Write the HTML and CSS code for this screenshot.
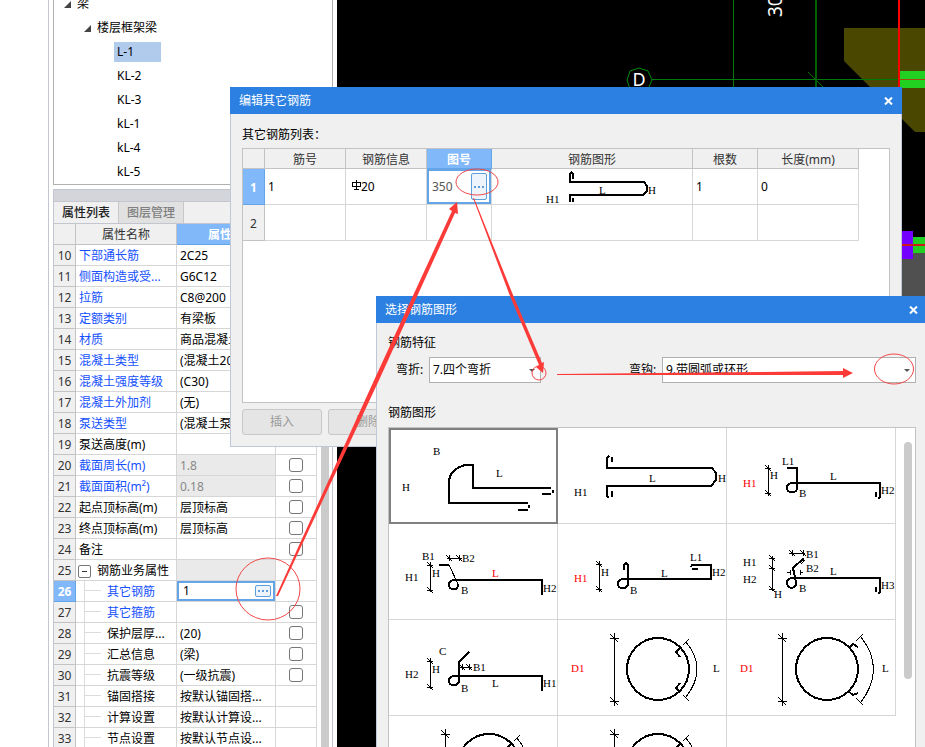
FILE: index.html
```html
<!DOCTYPE html>
<html lang="zh-CN">
<head>
<meta charset="utf-8">
<title>编辑其它钢筋</title>
<link rel="stylesheet" href="styles.css">
</head>
<body>
<svg class="defs" aria-hidden="true">
  <defs>
    <g id="tick"><path d="M-3 0H3M-3 -3L3 3"/></g>
    <g id="tick-h"><path d="M0 -3V3M-3 -3L3 3"/></g>
    <g id="tick-big"><path d="M-4 0H5M-4 -4L4 4"/></g>
    <g id="ring-in">
      <path class="thin" d="M56 13V86M128 22Q150 49 128 77M125 25L131 19M125 75L131 81"/>
      <use href="#tick-big" class="thin" x="56" y="18"/><use href="#tick-big" class="thin" x="56" y="81"/>
      <circle class="bar" cx="100" cy="49" r="31"/>
      <path class="bar" d="M122 28L118 32L122 37M122 63L118 68L122 72"/>
    </g>
  </defs>
</svg>

<div class="app">
  <aside class="dock">
    <ul class="tree">
      <li class="root"><svg width="7" height="7"><path d="M7 0V7H0Z"/></svg><span>梁</span></li>
      <li class="group"><svg width="7" height="7"><path d="M7 0V7H0Z"/></svg><span>楼层框架梁</span></li>
      <li class="leaf"><span class="picked">L-1</span></li>
      <li class="leaf"><span>KL-2</span></li>
      <li class="leaf"><span>KL-3</span></li>
      <li class="leaf"><span>kL-1</span></li>
      <li class="leaf"><span>kL-4</span></li>
      <li class="leaf"><span>kL-5</span></li>
    </ul>
    <section class="props">
      <div class="grip"></div>
      <div class="tabs"><button class="tab active" type="button">属性列表</button><button class="tab" type="button">图层管理</button></div>
      <div class="props-body">
        <table class="grid prop-table">
          <colgroup><col class="c-num"><col class="c-name"><col class="c-val"><col class="c-chk"></colgroup>
          <thead><tr><th></th><th>属性名称</th><th class="hot">属性值</th><th>附加</th></tr></thead>
          <tbody>
            <tr><th>10</th><td class="link">下部通长筋</td><td>2C25</td><td></td></tr>
            <tr><th>11</th><td class="link">侧面构造或受...</td><td>G6C12</td><td></td></tr>
            <tr><th>12</th><td class="link">拉筋</td><td>C8@200</td><td></td></tr>
            <tr><th>13</th><td class="link">定额类别</td><td>有梁板</td><td></td></tr>
            <tr><th>14</th><td class="link">材质</td><td>商品混凝土</td><td></td></tr>
            <tr><th>15</th><td class="link">混凝土类型</td><td>(混凝土20)</td><td></td></tr>
            <tr><th>16</th><td class="link">混凝土强度等级</td><td>(C30)</td><td></td></tr>
            <tr><th>17</th><td class="link">混凝土外加剂</td><td>(无)</td><td></td></tr>
            <tr><th>18</th><td class="link">泵送类型</td><td>(混凝土泵)</td><td></td></tr>
            <tr><th>19</th><td>泵送高度(m)</td><td></td><td></td></tr>
            <tr><th>20</th><td class="link">截面周长(m)</td><td class="off">1.8</td><td><input type="checkbox" aria-label="截面周长"></td></tr>
            <tr><th>21</th><td class="link">截面面积(m²)</td><td class="off">0.18</td><td><input type="checkbox" aria-label="截面面积"></td></tr>
            <tr><th>22</th><td>起点顶标高(m)</td><td>层顶标高</td><td><input type="checkbox" aria-label="起点顶标高"></td></tr>
            <tr><th>23</th><td>终点顶标高(m)</td><td>层顶标高</td><td><input type="checkbox" aria-label="终点顶标高"></td></tr>
            <tr><th>24</th><td>备注</td><td></td><td><input type="checkbox" aria-label="备注"></td></tr>
            <tr><th>25</th><td class="fold"><div class="fold-row"><button type="button" class="minus" aria-label="收起"></button>钢筋业务属性</div></td><td class="off"></td><td></td></tr>
            <tr><th class="hot">26</th><td class="child link">其它钢筋</td><td class="edit"><div class="editor"><input type="text" value="1" aria-label="其它钢筋"><button type="button" class="more" aria-label="更多"><i></i><i></i><i></i></button></div></td><td></td></tr>
            <tr><th>27</th><td class="child link">其它箍筋</td><td></td><td><input type="checkbox" aria-label="其它箍筋"></td></tr>
            <tr><th>28</th><td class="child">保护层厚...</td><td>(20)</td><td><input type="checkbox" aria-label="保护层厚"></td></tr>
            <tr><th>29</th><td class="child">汇总信息</td><td>(梁)</td><td><input type="checkbox" aria-label="汇总信息"></td></tr>
            <tr><th>30</th><td class="child">抗震等级</td><td>(一级抗震)</td><td><input type="checkbox" aria-label="抗震等级"></td></tr>
            <tr><th>31</th><td class="child">锚固搭接</td><td>按默认锚固搭...</td><td></td></tr>
            <tr><th>32</th><td class="child">计算设置</td><td>按默认计算设...</td><td></td></tr>
            <tr><th>33</th><td class="child">节点设置</td><td>按默认节点设...</td><td></td></tr>
          </tbody>
        </table>
        <div class="props-scroll"></div>
      </div>
    </section>
  </aside>

  <main class="canvas">
    <svg class="drawing" width="100%" height="100%">
      <g transform="translate(-337 0)">
        <path fill="#4a4800" d="M844 28H2000V132H915L844 61Z"/>
        <path fill="#505050" d="M890 250H2000V320H890Z"/>
        <path fill="#22d022" d="M900 71H2000V88H900ZM913 237H2000V253H913Z"/>
        <path fill="#7300ff" d="M895 231H913V259H895Z"/>
        <g fill="none" shape-rendering="crispEdges">
          <path stroke="#00780a" d="M733.5 0V90M652 79.5H900M808 72L824 88"/>
          <path stroke="#005f05" stroke-width="2" d="M816 0V90"/>
          <path stroke="#a04a10" d="M900 79.5H2000"/>
          <path stroke="#d01818" stroke-width="2" d="M895 245H2000"/>
          <path stroke="#f00" stroke-width="2" d="M899 0V88"/>
        </g>
        <path fill="none" stroke="#008a0c" d="M639 68L648 71L652 80L648 89L639 93L630 89L627 80L630 71Z"/>
        <text x="639" y="86" text-anchor="middle" font-size="18">D</text>
        <text transform="translate(782 17) rotate(-90)" font-size="19">30</text>
      </g>
    </svg>
  </main>
</div>

<section class="dialog edit-dialog">
  <header class="title"><span>编辑其它钢筋</span><button type="button" aria-label="关闭"><svg width="9" height="8"><path d="M1 0.5L8 7.5M8 0.5L1 7.5"/></svg></button></header>
  <div class="edit-body">
    <p class="caption">其它钢筋列表：</p>
    <div class="sheet">
      <table class="grid bar-table">
        <colgroup><col class="b-num"><col class="b-id"><col class="b-info"><col class="b-fig"><col class="b-shape"><col class="b-count"><col class="b-len"></colgroup>
        <thead><tr><th></th><th>筋号</th><th>钢筋信息</th><th class="hot">图号</th><th>钢筋图形</th><th>根数</th><th>长度(mm)</th></tr></thead>
        <tbody>
          <tr>
            <th class="hot">1</th><td>1</td>
            <td class="info"><svg class="grade" width="10" height="11"><path d="M1 2.5H9V6.5H1ZM5 0V9M3 9.5H8"/></svg>20</td>
            <td class="edit"><div class="editor tall"><input type="text" value="350" aria-label="图号"><button type="button" class="more" aria-label="更多"><i></i><i></i><i></i></button></div></td>
            <td class="shape-cell"><svg class="fig" width="200" height="35">
              <path class="bar" d="M80 3L78 5V13H152L155 17V22L151 26H78V33M81 4V10M81 29V33"/>
              <text x="107" y="25">L</text><text x="156" y="25">H</text><text x="54" y="34">H1</text>
            </svg></td>
            <td>1</td><td>0</td>
          </tr>
          <tr><th>2</th><td></td><td></td><td></td><td></td><td></td><td></td></tr>
        </tbody>
      </table>
    </div>
    <div class="actions"><button type="button" disabled>插入</button><button type="button" disabled>删除</button></div>
  </div>
</section>

<section class="dialog shape-dialog">
  <header class="title"><span>选择钢筋图形</span><button type="button" aria-label="关闭"><svg width="9" height="8"><path d="M1 0.5L8 7.5M8 0.5L1 7.5"/></svg></button></header>
  <div class="shape-body">
    <p class="caption">钢筋特征</p>
    <div class="filters">
      <label for="bend">弯折:</label>
      <div class="combo"><select id="bend"><option>7.四个弯折</option></select></div>
      <label for="hook" class="second">弯钩:</label>
      <div class="combo wide"><select id="hook"><option>9.带圆弧或环形</option></select></div>
    </div>
    <p class="caption lower">钢筋图形</p>
    <div class="gallery">
      <div class="cells">
        <button type="button" class="cell current"><svg class="fig" width="168" height="95">
          <path class="bar" d="M139 75H60V52Q62 41 76 37H84V60H162M164 62V65M153 66H162M140 77V80M129 82H139"/>
          <text x="44" y="27">B</text><text x="13" y="63">H</text><text x="107" y="49">L</text>
        </svg></button>
        <button type="button" class="cell"><svg class="fig" width="168" height="95">
          <path class="bar" d="M51 28L49 30V40H154L158 45V52L153 58H49V68L51 70M54 29V34M54 63V69"/>
          <text x="16" y="68">H1</text><text x="91" y="54">L</text><text x="160" y="54">H</text>
        </svg></button>
        <button type="button" class="cell"><svg class="fig" width="168" height="95">
          <path class="thin" d="M41.5 37V68"/><use href="#tick" class="thin" x="41" y="40"/><use href="#tick" class="thin" x="41" y="65"/>
          <path class="bar" d="M60 40H70V60C70 66 60 66 60 60C60 57 62 55 66 55H153V69L151 71M149 64V69"/>
          <text class="red" x="16" y="59">H1</text><text x="43" y="51">H</text><text x="55" y="37">L1</text><text x="103" y="52">L</text><text x="72" y="69">B</text><text x="154" y="66">H2</text>
        </svg></button>

        <button type="button" class="cell"><svg class="fig" width="168" height="95">
          <path class="thin" d="M41.5 38V68M58 34.5H73"/><use href="#tick" class="thin" x="41" y="41"/><use href="#tick" class="thin" x="41" y="66"/><use href="#tick-h" class="thin" x="60" y="34"/><use href="#tick-h" class="thin" x="70" y="34"/>
          <path class="bar" d="M50 41H60M69 60C70 67 60 67 60 61C60 58 62 56 66 56H153V71"/>
          <path class="mid" d="M60 41L69 60"/>
          <text x="33" y="36">B1</text><text x="73" y="38">B2</text><text x="16" y="57">H1</text><text x="43" y="53">H</text><text class="red" x="103" y="53">L</text><text x="72" y="70">B</text><text x="154" y="68">H2</text>
        </svg></button>
        <button type="button" class="cell"><svg class="fig" width="168" height="95">
          <path class="thin" d="M41.5 37V68"/><use href="#tick" class="thin" x="41" y="40"/><use href="#tick" class="thin" x="41" y="65"/>
          <path class="bar" d="M66 46V41L68 39L70 41V59C70 66 60 66 60 60C60 57 62 55 66 55H153V41H134L133 43M134 45H140"/>
          <text class="red" x="16" y="58">H1</text><text x="43" y="52">H</text><text x="103" y="53">L</text><text x="72" y="70">B</text><text x="132" y="37">L1</text><text x="154" y="52">H2</text>
        </svg></button>
        <button type="button" class="cell"><svg class="fig" width="168" height="95">
          <path class="thin" d="M45.5 32V67M62 29.5H78M60 48.5H64M63.5 46V51M73.5 46V51M73 48.5H76"/><use href="#tick" class="thin" x="45" y="34"/><use href="#tick" class="thin" x="45" y="44"/><use href="#tick" class="thin" x="45" y="65"/><use href="#tick-h" class="thin" x="65" y="29"/><use href="#tick-h" class="thin" x="76" y="29"/>
          <path class="bar" d="M77 37L76 35L66 44L69 58C70 66 60 65 60 59C60 56 62 54 66 54H153V68L151 70M149 63V68"/>
          <path class="mid" d="M77 37L74 40"/>
          <text x="16" y="42">H1</text><text x="16" y="59">H2</text><text x="47" y="74">H</text><text x="79" y="34">B1</text><text x="79" y="48">B2</text><text x="103" y="51">L</text><text x="72" y="68">B</text><text x="154" y="65">H3</text>
        </svg></button>

        <button type="button" class="cell"><svg class="fig" width="168" height="95">
          <path class="thin" d="M41.5 38V69M71 47.5H83"/><use href="#tick" class="thin" x="41" y="41"/><use href="#tick" class="thin" x="41" y="67"/><use href="#tick-h" class="thin" x="73" y="47"/><use href="#tick-h" class="thin" x="80" y="47"/>
          <path class="bar" d="M80 32L70 42V60C70 67 60 67 60 61C60 58 62 56 66 56H153V71"/>
          <text x="50" y="35">C</text><text x="43" y="53">H</text><text x="16" y="58">H2</text><text x="84" y="51">B1</text><text x="103" y="67">L</text><text x="72" y="72">B</text><text x="154" y="67">H1</text>
        </svg></button>
        <button type="button" class="cell"><svg class="fig" width="168" height="95">
          <use href="#ring-in"/><text class="red" x="13" y="52">D1</text><text x="155" y="52">L</text>
        </svg></button>
        <button type="button" class="cell"><svg class="fig" width="168" height="95">
          <path class="thin" d="M55 13V86M134 17Q159 49 134 82M129 21L136 14M129 78L136 85"/>
          <use href="#tick-big" class="thin" x="55" y="18"/><use href="#tick-big" class="thin" x="55" y="81"/>
          <circle class="bar" cx="100" cy="49" r="31"/>
          <path class="bar" d="M122 28L126 24L131 27M121 71L126 75L131 73"/>
          <text class="red" x="13" y="52">D1</text><text x="155" y="52">L</text>
        </svg></button>

        <button type="button" class="cell"><svg class="fig" width="168" height="95">
          <use href="#ring-in"/>
        </svg></button>
        <button type="button" class="cell"><svg class="fig" width="168" height="95">
          <use href="#ring-in"/>
        </svg></button>
      </div>
      <div class="thumb"></div>
    </div>
  </div>
</section>

<svg class="marks" width="100%" height="100%" aria-hidden="true">
  <g fill="none" stroke="#f04848">
    <ellipse cx="268" cy="589" rx="32" ry="31"/>
    <ellipse cx="477" cy="182" rx="21" ry="13"/>
    <circle cx="539" cy="373" r="7"/>
    <ellipse cx="894" cy="369" rx="19.5" ry="15"/>
  </g>
  <g fill="#fc3a38">
    <path d="M276 596L278 596L380 378L455 213L458 214L457 202L449 209L452 211L376 376Z"/>
    <path d="M473 198L510 296L539 365L536 367L543 373L544 362L542 363L513 295L474 198Z"/>
    <path d="M557 374V375L843 375V378L853 373L843 368V371L760 372Z"/>
  </g>
</svg>
</body>
</html>
```

FILE: styles.css
```css
* { box-sizing: border-box; }

body {
  margin: 0;
  height: 100vh;
  overflow: hidden;
  position: relative;
  background: #fff;
  color: #000;
  font: 12px/20px "Noto Sans", "Noto Sans CJK SC", sans-serif;
}

button, input, select { font: inherit; color: inherit; margin: 0; padding: 0; }
button { border: 0; background: none; }
p, ul { margin: 0; padding: 0; }

.defs { position: absolute; width: 0; height: 0; }

/* workspace */
.app { display: flex; height: 100%; }

.dock {
  flex: none;
  display: flex;
  flex-direction: column;
  gap: 4px;
  width: 289px;
  margin-left: 48px;
  padding: 0 4px;
  border-left: 1px solid #c3c5cf;
}

.canvas { flex: 1; min-width: 0; background: #000; }
.drawing { display: block; }
.drawing text { fill: #fff; }

/* component tree */
.tree {
  flex: none;
  display: flex;
  flex-direction: column;
  justify-content: flex-end;
  height: 185px;
  overflow: hidden;
  list-style: none;
  border: 1px solid #b0b0b0;
  border-top: 0;
}
.tree li { flex: none; display: flex; align-items: center; gap: 6px; height: 24px; }
.tree svg { fill: #444; }
.tree .root { padding-left: 10px; }
.tree .group { padding-left: 30px; }
.tree .leaf { padding-left: 60px; }
.leaf span { width: 47px; padding-left: 3px; }
.leaf .picked { background: #b1cbec; }

/* property panel */
.props {
  flex: 1;
  min-height: 0;
  overflow: hidden;
  border: 1px solid #c3c5cf;
  border-bottom: 0;
}
.grip { height: 12px; background: #d4d5da; border-bottom: 1px solid #c3c5cf; }
.tabs { display: flex; height: 22px; background: #f0f0f0; border-bottom: 1px solid #c3c5cf; }
.tab { width: 65px; border-right: 1px solid #c8c8cc; background: #e1e1e1; color: #808080; font-weight: 500; }
.tab.active { background: #f0f0f0; color: #222; }
.props-body { display: flex; gap: 4px; }
.props-scroll { width: 8px; background: #cbcbcb; }

/* tables */
.grid { table-layout: fixed; border-collapse: separate; border-spacing: 0; }
.grid th, .grid td {
  padding: 2px 0 0;
  overflow: hidden;
  line-height: 18px;
  white-space: nowrap;
  border: solid #d6d6d6;
  border-width: 0 1px 1px 0;
}
.grid th { background: #f0f0f0; border-color: #c3c3c3; color: #333; font-weight: 400; text-align: center; }
.grid .hot { background: #80b8fa; border-color: #64a5e8; color: #fff; font-weight: 700; }
.grid .off { background: #eaeaea; color: #888; }
.grid .link { color: #1450ff; }
.grid .edit { padding: 0; }

.prop-table { flex: none; width: 263px; }
.prop-table th, .prop-table td { height: 21px; }
.prop-table td { padding-left: 3px; }
.prop-table td:last-child { padding: 0; text-align: center; }
.c-num { width: 22px; }
.c-name { width: 101px; }
.c-val { width: 99px; }
.c-chk { width: 41px; }

input[type="checkbox"] {
  display: block;
  width: 14px;
  height: 14px;
  margin: 0 auto;
  appearance: none;
  background: #fff;
  border: 1px solid #777;
  border-radius: 3px;
}

.prop-table .fold { padding-left: 2px; }
.fold-row { display: flex; align-items: center; gap: 6px; }
.minus {
  display: grid;
  place-items: center;
  width: 13px;
  height: 13px;
  background: #fff;
  border: 1px solid #777;
  border-radius: 2px;
}
.minus::before { content: ""; width: 5px; height: 1px; background: #333; }

.prop-table .child {
  padding-left: 31px;
  background:
    linear-gradient(#dcdcdc, #dcdcdc) 8px 0 / 1px 100% no-repeat,
    linear-gradient(#dcdcdc, #dcdcdc) 8px 9px / 17px 1px no-repeat;
}

.editor {
  display: flex;
  align-items: center;
  height: 20px;
  padding: 0 2px 0 4px;
  background: #fff;
  border: 2px solid #64a5e8;
}
.editor input { flex: 1; min-width: 0; width: 0; height: 16px; border: 0; background: none; outline: 0; }
.more {
  display: flex;
  align-items: center;
  justify-content: center;
  gap: 2px;
  width: 16px;
  height: 12px;
  background: #eef4fb;
  border: 1px solid #5c9fdc;
  border-radius: 2px;
}
.more i { width: 2px; height: 2px; background: #5c9fdc; }
.editor.tall { height: 35px; padding-left: 3px; color: #555; }
.tall .more { height: 27px; }

/* dialogs */
.dialog { position: absolute; background: #f0f0f0; }
.edit-dialog { top: 87px; left: 230px; width: 672px; }
.shape-dialog { top: 296px; left: 376px; right: 0; bottom: 0; display: flex; flex-direction: column; }

.title {
  flex: none;
  display: flex;
  align-items: center;
  justify-content: space-between;
  height: 27px;
  padding: 0 9px;
  background: #2b80e2;
  color: #fff;
}
.title button { display: flex; }
.shape-dialog .title { padding-right: 7px; }
.title svg { fill: none; stroke: #fff; stroke-width: 2; }

.edit-body {
  padding: 11px 11px 11px;
  border: solid #c0c8d8;
  border-width: 0 1px 1px;
}
.sheet { height: 255px; margin: 3px 0 6px; background: #fff; border: 1px solid #c3c3c3; }
.bar-table { width: 616px; }
.bar-table thead th { height: 20px; line-height: 17px; }
.bar-table tbody th, .bar-table tbody td { height: 36px; }
.bar-table td { padding: 0 0 0 3px; }
.bar-table .info { padding-left: 5px; }
.bar-table .shape-cell { padding: 0; }
.b-num { width: 22px; }
.b-id, .b-info { width: 81px; }
.b-fig, .b-count { width: 65px; }
.b-shape { width: 201px; }
.b-len { width: 101px; }
.grade { fill: none; stroke: #000; shape-rendering: crispEdges; }

.actions { display: flex; gap: 6px; }
.actions button {
  width: 80px;
  height: 26px;
  background: #e5e5e5;
  border: 1px solid #c8c8c8;
  border-radius: 3px;
  color: #999;
}

.shape-body {
  flex: 1;
  min-height: 0;
  display: flex;
  flex-direction: column;
  padding: 10px 9px 0 11px;
  border-left: 1px solid #c0c8d8;
}
.filters { display: flex; align-items: center; margin-top: 4px; padding-left: 8px; }
.filters label { width: 33px; }
.filters .second { margin-left: 88px; }
.combo { position: relative; width: 112px; height: 26px; }
.combo.wide { flex: 1; }
.combo select {
  display: block;
  width: 100%;
  height: 100%;
  padding-left: 3px;
  appearance: none;
  background: #fff;
  border: 1px solid #b0b0b0;
  border-radius: 0;
}
.combo::after {
  content: "";
  position: absolute;
  right: 6px;
  top: 12px;
  border: solid transparent;
  border-width: 3px 3px 0;
  border-top-color: #555;
}
.caption.lower { margin: 20px 0 4px; }

.gallery {
  flex: 1;
  min-height: 0;
  display: flex;
  gap: 8px;
  overflow: hidden;
  background: #fff;
  border: 1px solid #c3c3c3;
  border-bottom: 0;
}
.cells { flex: none; display: grid; grid-template-columns: repeat(3, 169px); grid-auto-rows: 96px; }
.cell { border: solid #d6d6d6; border-width: 0 1px 1px 0; text-align: left; }
.cell.current { outline: 2px solid #808080; outline-offset: -2px; }
.thumb { width: 8px; height: 237px; margin-top: 14px; border-radius: 4px; background: #cbcbcb; }

/* bar figures */
.fig { display: block; shape-rendering: crispEdges; }
.fig text { font: 11px "Liberation Serif", serif; fill: #000; }
.fig .red { fill: #f00; }
.bar { fill: none; stroke: #000; stroke-width: 2; }
.mid { fill: none; stroke: #000; stroke-width: 1; }
.thin { fill: none; stroke: #000; stroke-width: 1; }

.marks { position: absolute; inset: 0; pointer-events: none; }
```
